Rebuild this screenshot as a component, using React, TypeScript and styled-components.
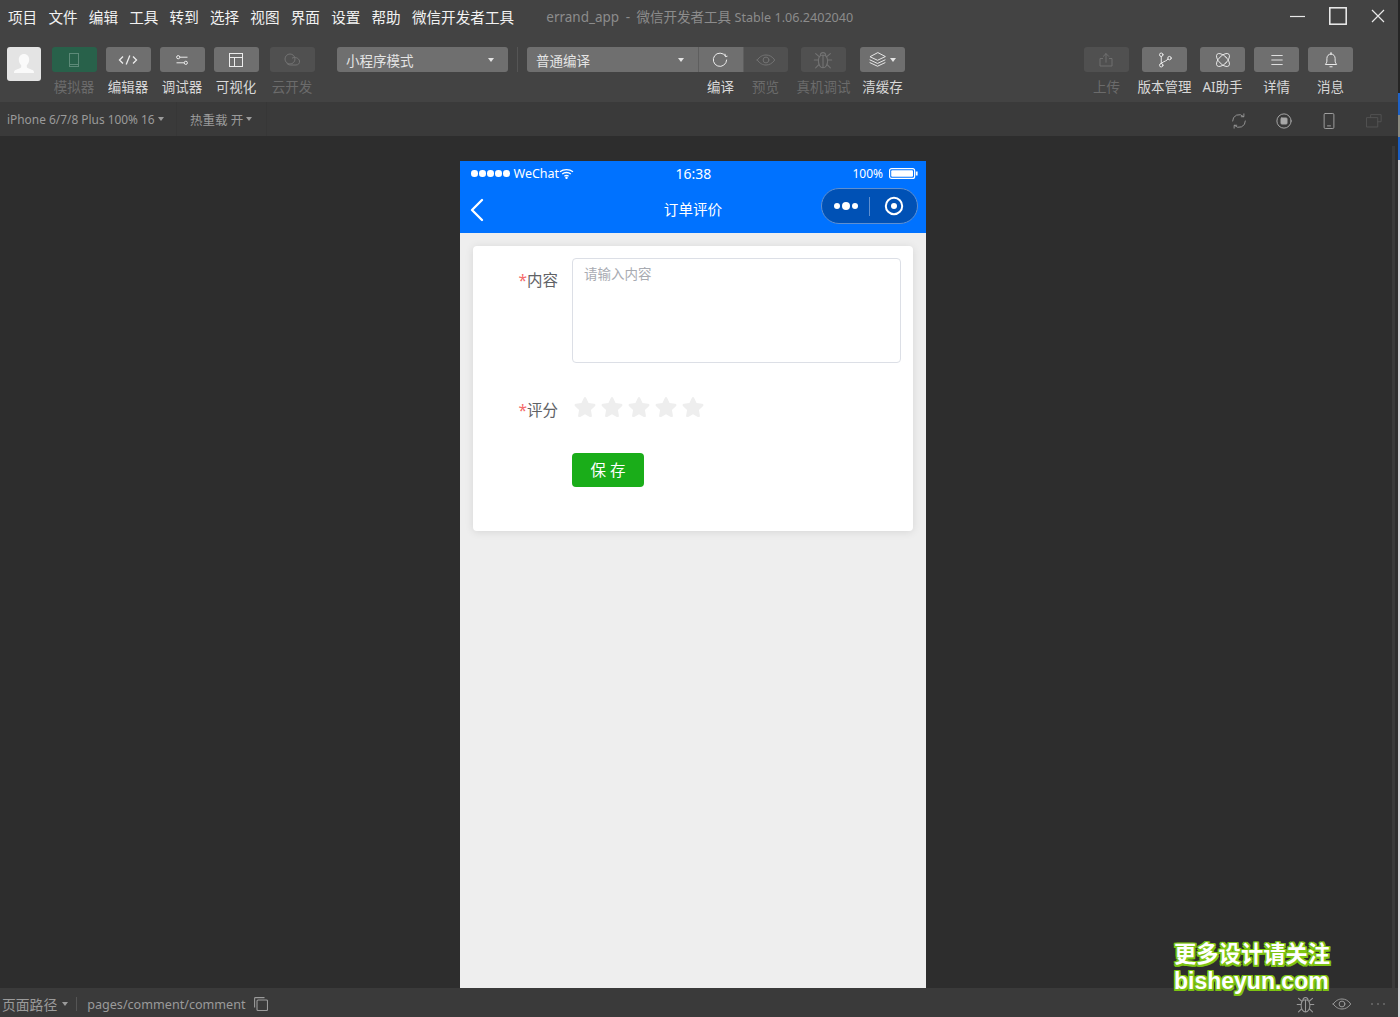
import React from 'react';
import styled, { createGlobalStyle } from 'styled-components';
import { ChevronLeft } from 'lucide-react';

const GlobalStyle = createGlobalStyle`
  html, body {
    margin: 0;
    padding: 0;
    height: 100%;
    background: #2d2d2d;
    overflow: hidden;
  }
  body {
    font-family: "Noto Sans", "Noto Sans CJK SC", sans-serif;
  }
  * { box-sizing: border-box; }
`;

const Page = styled.div`
  position: relative;
  width: 1400px;
  height: 1017px;
  display: flex;
  overflow: hidden;
`;

const Win = styled.div`
  width: 1398px;
  flex: none;
  display: flex;
  flex-direction: column;
`;

const BackWindow = styled.div`
  width: 2px;
  flex: none;
  display: flex;
  flex-direction: column;
`;

const BackSlice = styled.div<{ $h: number; $c: string }>`
  height: ${p => p.$h}px;
  flex: none;
  background: ${p => p.$c};
`;

const Header = styled.div`
  height: 102px;
  flex: none;
  background: #434343;
`;

const MenuRow = styled.div`
  height: 32px;
  display: flex;
  align-items: center;
  padding-left: 8px;
`;

const MenuItem = styled.span`
  font-size: 14.6px;
  color: #f2f2f2;
  margin-right: 11.2px;
  white-space: nowrap;
`;

const WindowTitle = styled.span`
  margin-left: 21px;
  font-size: 13.5px;
  color: #8c8c8c;
  white-space: nowrap;
`;

const TitleDash = styled.span`
  margin: 0 6.5px;
`;

const TitleBuild = styled.span`
  font-size: 12.6px;
`;

const WindowControls = styled.div`
  margin-left: auto;
  display: flex;
  align-items: center;
  gap: 24px;
  padding-right: 13px;
`;

const ToolRow = styled.div`
  display: flex;
  align-items: flex-start;
  padding: 15px 0 0 7px;
`;

const Avatar = styled.div`
  width: 34px;
  height: 34px;
  flex: none;
  border-radius: 3px;
  background: #e4e4e4;
  display: flex;
  align-items: center;
  justify-content: center;
  overflow: hidden;
  margin-right: 10.6px;
`;

const Tool = styled.div<{ $after?: number }>`
  width: 45px;
  flex: none;
  display: flex;
  flex-direction: column;
  align-items: center;
  margin-right: ${p => p.$after ?? 9}px;
`;

const ToolButton = styled.div<{ $tone?: 'on' | 'off' | 'green' }>`
  width: 45px;
  height: 25px;
  border-radius: 3px;
  display: flex;
  align-items: center;
  justify-content: center;
  background: ${p =>
    p.$tone === 'green' ? '#28614a' : p.$tone === 'off' ? '#505050' : '#6f6f6f'};
`;

const ToolLabel = styled.span<{ $off?: boolean }>`
  margin-top: 5px;
  font-size: 13.5px;
  line-height: 20px;
  white-space: nowrap;
  color: ${p => (p.$off ? '#6b6b6b' : '#d8d8d8')};
`;

const ModeSelect = styled.div<{ $width: number; $flatRight?: boolean }>`
  width: ${p => p.$width}px;
  height: 25px;
  flex: none;
  border-radius: ${p => (p.$flatRight ? '3px 0 0 3px' : '3px')};
  background: #6f6f6f;
  display: flex;
  align-items: center;
  justify-content: space-between;
  padding: 0 14px 0 9px;
  font-size: 13.5px;
  color: #e4e4e4;
`;

const SmallCaret = styled.i<{ $color?: string }>`
  display: inline-block;
  width: 0;
  height: 0;
  border-left: 3px solid transparent;
  border-right: 3px solid transparent;
  border-top: 4px solid ${p => p.$color ?? '#e4e4e4'};
`;

const ModeColumn = styled.div`
  margin-left: 22.4px;
  flex: none;
`;

const ToolDivider = styled.div`
  width: 1px;
  height: 25px;
  flex: none;
  background: #555;
  margin: 0 9px;
`;

const CompileGroup = styled.div`
  display: flex;
  flex-direction: column;
  flex: none;
  margin-right: 13px;
`;

const CompileButtons = styled.div`
  display: flex;
`;

const CompileLabels = styled.div`
  display: flex;
  padding-left: 171px;
`;

const CompileLabelCell = styled.div`
  width: 45px;
  display: flex;
  justify-content: center;
`;

const SegButton = styled.div<{ $off?: boolean }>`
  width: 45px;
  height: 25px;
  display: flex;
  align-items: center;
  justify-content: center;
  background: ${p => (p.$off ? '#505050' : '#6f6f6f')};
  border-left: 1px solid #5e5e5e;
  border-radius: ${p => (p.$off ? '0 3px 3px 0' : '0')};
`;

const Spacer = styled.div`
  flex: 1;
`;

const SubBar = styled.div`
  height: 34px;
  flex: none;
  background: #3a3a3a;
  display: flex;
  align-items: center;
  font-size: 11.9px;
  color: #9b9b9b;
`;

const SubItem = styled.div<{ $width: number }>`
  width: ${p => p.$width}px;
  height: 100%;
  padding-left: ${p => (p.$width > 170 ? 7 : 13)}px;
  display: flex;
  align-items: center;
  gap: 3px;
  white-space: nowrap;
  border-right: 1px solid #373737;
  font-size: ${p => (p.$width > 170 ? 11.9 : 12.5)}px;
`;

const SubIcons = styled.div`
  margin-left: auto;
  display: flex;
  align-items: center;
  gap: 27px;
  padding: 3px 15px 0 0;
`;

const Stage = styled.div`
  position: relative;
  flex: 1;
  min-height: 0;
  background: #2d2d2d;
  display: flex;
  justify-content: center;
  padding: 25px 12px 0 0;
`;

const StageScroll = styled.div`
  position: absolute;
  right: 3px;
  top: 10px;
  bottom: 0;
  width: 3px;
  background: #393939;
`;

const Phone = styled.div`
  width: 466px;
  display: flex;
  flex-direction: column;
  background: #eeeeee;
`;

const PhoneHead = styled.div`
  height: 72px;
  flex: none;
  background: #0072ff;
  color: #fff;
`;

const StatusLine = styled.div`
  height: 25px;
  display: grid;
  grid-template-columns: 1fr 1fr 1fr;
  align-items: center;
  padding: 0 8px 0 11px;
  font-size: 12.5px;
`;

const StatusLeft = styled.div`
  display: flex;
  align-items: center;
  gap: 4px;
`;

const StatusTime = styled.div`
  text-align: center;
  font-size: 14px;
  margin-left: -2px;
`;

const StatusRight = styled.div`
  display: flex;
  align-items: center;
  justify-content: flex-end;
  gap: 6px;
  font-size: 12px;
`;

const Dots = styled.div`
  display: flex;
  gap: 1.5px;
`;

const Dot = styled.i`
  width: 6.5px;
  height: 6.5px;
  border-radius: 50%;
  background: #fff;
`;

const NavLine = styled.div`
  height: 47px;
  position: relative;
  display: flex;
  align-items: center;
  justify-content: center;
  font-size: 14.6px;
  padding-bottom: 2px;
`;

const BackIcon = styled.div`
  position: absolute;
  left: -3px;
  top: 4px;
  display: flex;
`;

const Capsule = styled.div`
  position: absolute;
  right: 8px;
  top: 2px;
  width: 97px;
  height: 36px;
  border-radius: 18px;
  background: #0051b5;
  border: 1px solid #5e8fd0;
  display: flex;
  align-items: center;
`;

const CapsuleSide = styled.div`
  flex: 1;
  display: flex;
  align-items: center;
  justify-content: center;
  gap: 2px;
`;

const CapsuleBar = styled.div`
  width: 1px;
  height: 19px;
  background: #5e8fd0;
`;

const CapsuleDot = styled.i<{ $big?: boolean }>`
  width: ${p => (p.$big ? 8 : 6)}px;
  height: ${p => (p.$big ? 8 : 6)}px;
  border-radius: 50%;
  background: #fff;
`;

const Card = styled.div`
  margin: 13px 13px 0;
  height: 285px;
  background: #fff;
  border-radius: 4px;
  box-shadow: 0 1px 8px rgba(0, 0, 0, 0.1);
  padding: 12px 12px 0 0;
`;

const FormRow = styled.div<{ $after: number }>`
  display: flex;
  margin-bottom: ${p => p.$after}px;
`;

const FieldLabel = styled.div<{ $top?: number }>`
  width: 85px;
  flex: none;
  padding-top: ${p => p.$top ?? 0}px;
  text-align: right;
  font-size: 15.5px;
  line-height: 20px;
  color: #606266;
  white-space: nowrap;
`;

const Required = styled.span`
  color: #f56c6c;
`;

const TextArea = styled.div`
  height: 105px;
  border: 1px solid #dcdfe6;
  border-radius: 4px;
  padding: 5px 11px;
  font-size: 13.5px;
  line-height: 20px;
  color: #a8abb2;
`;

const FieldBody = styled.div`
  margin-left: 14px;
  flex: 1;
  min-width: 0;
`;

const Stars = styled.div`
  display: flex;
  gap: 5px;
  height: 21px;
  margin: 7px 0 0 2px;
`;

const SaveButton = styled.div`
  width: 72px;
  height: 34px;
  background: #1aad19;
  border-radius: 4px;
  color: #fff;
  font-size: 15.5px;
  padding-bottom: 2px;
  display: flex;
  align-items: center;
  justify-content: center;
`;

const StatusBar = styled.div`
  height: 29px;
  flex: none;
  background: #3a3a3a;
  display: flex;
  align-items: center;
  font-size: 12.6px;
  color: #9b9b9b;
  padding-top: 2px;
`;

const PathSelect = styled.div`
  display: flex;
  align-items: center;
  gap: 5px;
  padding: 0 8px 0 2px;
  font-size: 13.8px;
  border-right: 1px solid #555;
  height: 14px;
`;

const PagePath = styled.div`
  margin: 1px 0 0 10px;
  display: flex;
  align-items: center;
  gap: 8px;
`;

const BarIcons = styled.div`
  margin-left: auto;
  display: flex;
  align-items: center;
  gap: 16px;
  padding: 1px 11px 0 0;
`;

const Watermark = styled.div`
  position: absolute;
  left: 1174px;
  top: 940px;
  width: 158px;
  font-weight: 700;
  color: #fff;
  text-shadow: 1.5px 0 0 #7ec412, -1.5px 0 0 #7ec412, 0 1.5px 0 #7ec412, 0 -1.5px 0 #7ec412,
    1.5px 1.5px 0 #7ec412, -1.5px 1.5px 0 #7ec412, 1.5px -1.5px 0 #7ec412, -1.5px -1.5px 0 #7ec412;
`;

const WatermarkLine = styled.div`
  font-size: 22.3px;
  line-height: 28px;
  white-space: nowrap;
`;

const WatermarkUrl = styled.div`
  font-family: "Liberation Sans", sans-serif;
  font-size: 23px;
  line-height: 26px;
  white-space: nowrap;
`;

const I = (props: React.SVGProps<SVGSVGElement> & { s?: number }) => {
  const { s = 16, children, ...rest } = props;
  return (
    <svg width={s} height={s} viewBox="0 0 24 24" fill="none" stroke="currentColor" strokeWidth={1.5} strokeLinecap="round" strokeLinejoin="round" {...rest}>
      {children}
    </svg>
  );
};

const BugIcon = ({ color, s = 22, after = 0 }: { color: string; s?: number; after?: number }) => (
  <I s={s} style={{ color, marginRight: after }} strokeWidth={1.2}>
    <path d="M12 6.500c-3.300 0-5 2.600-5 6.500s2 7.500 5 7.500 5-3.600 5-7.500-1.700-6.500-5-6.500zM12 6.500V20.500M9 7.500c0-2 1.200-3.500 3-3.500s3 1.500 3 3.500M7 12H2.500M17 12h4.500M7.500 8 4 5M16.500 8 20 5M7.500 17 4 20.500M16.500 17 20 20.500" />
  </I>
);

const EyeIcon = ({ color, s = 20, after = 0 }: { color: string; s?: number; after?: number }) => (
  <I s={s} style={{ color, marginRight: after }} strokeWidth={1.2}>
    <path d="M1.500 12C4.500 7.800 8 6 12 6s7.500 1.800 10.500 6c-3 4.200-6.500 6-10.500 6S4.500 16.200 1.500 12z" />
    <circle cx="12" cy="12" r="3.500" />
  </I>
);

const White = '#ececec';
const Dim = '#737373';

export default function App() {
  const menus = ['项目', '文件', '编辑', '工具', '转到', '选择', '视图', '界面', '设置', '帮助', '微信开发者工具'];

  return (
    <Page>
      <GlobalStyle />
      <Win>
        <Header>
          <MenuRow>
            {menus.map(m => (
              <MenuItem key={m}>{m}</MenuItem>
            ))}
            <WindowTitle>
              errand_app<TitleDash>-</TitleDash>微信开发者工具 <TitleBuild>Stable 1.06.2402040</TitleBuild>
            </WindowTitle>
            <WindowControls>
              <svg width="15" height="15" viewBox="0 0 15 15" stroke="#e8e8e8" strokeWidth="1.2"><path d="M0 7.500h15" /></svg>
              <svg width="18" height="18" viewBox="0 0 18 18" fill="none" stroke="#f0f0f0" strokeWidth="1.500"><rect x="0.800" y="0.800" width="16.400" height="16.400" /></svg>
              <svg width="14" height="14" viewBox="0 0 14 14" stroke="#e8e8e8" strokeWidth="1.200"><path d="M1 1l12 12M13 1L1 13" /></svg>
            </WindowControls>
          </MenuRow>
          <ToolRow>
            <Avatar>
              <svg width="34" height="34" viewBox="0 0 34 34" fill="#fafafa">
                <path d="M17 7c3.300 0 5.200 2.500 5.200 5.600 0 2.400-1 4.400-2.400 5.600v1.700c0 1 3.600 2 5.800 3.200 1 .6 1.400 1.400 1.400 2.900H7c0-1.500.4-2.300 1.400-2.900 2.200-1.200 5.800-2.200 5.800-3.200v-1.700c-1.400-1.200-2.400-3.200-2.400-5.600C11.800 9.500 13.700 7 17 7z" />
              </svg>
            </Avatar>
            <Tool>
              <ToolButton $tone="green">
                <svg width="10" height="14" viewBox="0 0 10 14" fill="none" stroke="#5d8a78" strokeWidth="1"><rect x="0.500" y="0.500" width="9" height="13" /><path d="M0.500 11.500h9" /></svg>
              </ToolButton>
              <ToolLabel $off>模拟器</ToolLabel>
            </Tool>
            <Tool>
              <ToolButton>
                <svg width="20" height="12" viewBox="0 0 20 12" fill="none" stroke={White} strokeWidth="1.300">
                  <path d="M5 2.500 1.500 6 5 9.500M15 2.500 18.500 6 15 9.500M11.800 1.500 8.200 10.500" />
                </svg>
              </ToolButton>
              <ToolLabel>编辑器</ToolLabel>
            </Tool>
            <Tool>
              <ToolButton>
                <svg width="12" height="10" viewBox="0 0 12 10" fill="none" stroke={White} strokeWidth="1">
                  <circle cx="2.200" cy="2.200" r="1.600" /><path d="M3.800 2.200H11.500M.5 7.800h7.700" /><circle cx="9.800" cy="7.800" r="1.600" />
                </svg>
              </ToolButton>
              <ToolLabel>调试器</ToolLabel>
            </Tool>
            <Tool $after={11}>
              <ToolButton>
                <svg width="14" height="14" viewBox="0 0 14 14" fill="none" stroke={White} strokeWidth="1"><rect x="0.500" y="0.500" width="13" height="13" /><path d="M0.500 4.500h13M5.500 4.500v9" /></svg>
              </ToolButton>
              <ToolLabel>可视化</ToolLabel>
            </Tool>
            <Tool $after={0}>
              <ToolButton $tone="off">
                <svg width="17" height="13" viewBox="0 0 17 13" fill="none" stroke={Dim} strokeWidth="1">
                  <circle cx="6" cy="6" r="5" /><path d="M8 5.200c3-1.800 7 0 7.500 2.800.3 2.300-1.200 4-3.500 4H6.500C4.500 12 3 11 2.500 9.500" />
                </svg>
              </ToolButton>
              <ToolLabel $off>云开发</ToolLabel>
            </Tool>
            <ModeColumn>
              <ModeSelect $width={171}>
                小程序模式
                <SmallCaret />
              </ModeSelect>
            </ModeColumn>
            <ToolDivider />
            <CompileGroup>
              <CompileButtons>
                <ModeSelect $width={171} $flatRight>
                  普通编译
                  <SmallCaret />
                </ModeSelect>
                <SegButton>
                  <I s={20} style={{ color: White, marginLeft: -1 }} strokeWidth={1.200}>
                    <path d="M18.500 7A8 8 0 1 0 20 12M20.500 7.500l-2 .500-.500-3" />
                  </I>
                </SegButton>
                <SegButton $off>
                  <EyeIcon color={Dim} />
                </SegButton>
              </CompileButtons>
              <CompileLabels>
                <CompileLabelCell><ToolLabel>编译</ToolLabel></CompileLabelCell>
                <CompileLabelCell><ToolLabel $off>预览</ToolLabel></CompileLabelCell>
              </CompileLabels>
            </CompileGroup>
            <Tool $after={14}>
              <ToolButton $tone="off">
                <BugIcon color={Dim} />
              </ToolButton>
              <ToolLabel $off>真机调试</ToolLabel>
            </Tool>
            <Tool $after={0}>
              <ToolButton>
                <I s={19} style={{ color: White, marginRight: 3 }} strokeWidth={1.200}>
                  <path d="M12 3.500 2.500 8.500 12 13l9.500-4.500zM2.500 12.500 12 17l9.500-4.500M2.500 16 12 20.500 21.500 16" />
                </I>
                <SmallCaret />
              </ToolButton>
              <ToolLabel>清缓存</ToolLabel>
            </Tool>
            <Spacer />
            <Tool $after={13}>
              <ToolButton $tone="off">
                <I s={18} style={{ color: Dim, marginLeft: -1 }} strokeWidth={1.200}>
                  <path d="M7.500 10H4v10h16V10h-3.500M12 15V3.500M8.500 7 12 3.500 15.500 7" />
                </I>
              </ToolButton>
              <ToolLabel $off>上传</ToolLabel>
            </Tool>
            <Tool $after={13}>
              <ToolButton>
                <I s={18} style={{ color: White }} strokeWidth={1.300}>
                  <circle cx="7" cy="5" r="2.300" /><circle cx="7" cy="19" r="2.300" /><circle cx="18" cy="9.500" r="2.300" />
                  <path d="M7 7.300v9.400M16 10.500c-1 3-5 2.500-9 6" />
                </I>
              </ToolButton>
              <ToolLabel>版本管理</ToolLabel>
            </Tool>
            <Tool>
              <ToolButton>
                <I s={18} style={{ color: White }} strokeWidth={1.200}>
                  <ellipse cx="12" cy="12" rx="5.500" ry="11" transform="rotate(45 12 12)" />
                  <ellipse cx="12" cy="12" rx="5.500" ry="11" transform="rotate(-45 12 12)" />
                </I>
              </ToolButton>
              <ToolLabel>AI助手</ToolLabel>
            </Tool>
            <Tool>
              <ToolButton>
                <I s={18} style={{ color: White }} strokeWidth={1.200}><path d="M5 6h14M5 12h14M5 18h14" /></I>
              </ToolButton>
              <ToolLabel>详情</ToolLabel>
            </Tool>
            <Tool $after={45}>
              <ToolButton>
                <I s={18} style={{ color: White }} strokeWidth={1.300}>
                  <path d="M12 4c-3.500 0-5.500 2.800-5.500 6v3.500c0 2-1.500 3.500-2 4.500h15c-.5-1-2-2.500-2-4.500V10c0-3.200-2-6-5.500-6zM12 2v2M10.500 21h3" />
                </I>
              </ToolButton>
              <ToolLabel>消息</ToolLabel>
            </Tool>
          </ToolRow>
        </Header>
        <SubBar>
          <SubItem $width={177}>
            iPhone 6/7/8 Plus 100% 16 <SmallCaret $color="#9b9b9b" />
          </SubItem>
          <SubItem $width={90}>
            热重载 开 <SmallCaret $color="#9b9b9b" />
          </SubItem>
          <SubIcons>
            <I s={18} style={{ color: '#9a9a9a' }} strokeWidth={1.200}>
              <path d="M3.500 12A8.500 8.500 0 0 1 18 6M20.500 12A8.500 8.500 0 0 1 6 18M18.500 2.500V6.300H15M5.500 21.500V17.700H9" />
            </I>
            <I s={18} style={{ color: '#a8a8a8' }} strokeWidth={1.300}>
              <circle cx="12" cy="12" r="9.500" />
              <rect x="8" y="8" width="8" height="8" rx="1" fill="currentColor" />
            </I>
            <I s={18} style={{ color: '#a8a8a8' }} strokeWidth={1.200}>
              <rect x="5.500" y="2" width="13" height="20" rx="1.500" /><path d="M10 18.500h4" />
            </I>
            <I s={18} style={{ color: '#555' }} strokeWidth={1.200}>
              <path d="M7.500 7V3.500h14V13H17M2.500 7.500H17V20H2.500z" />
            </I>
          </SubIcons>
        </SubBar>
        <Stage>
          <StageScroll />
          <Phone>
            <PhoneHead>
              <StatusLine>
                <StatusLeft>
                  <Dots>
                    <Dot /><Dot /><Dot /><Dot /><Dot />
                  </Dots>
                  WeChat
                  <svg width="15" height="11" viewBox="0 0 15 11" fill="none" stroke="#fff" strokeWidth="1.300" style={{ marginLeft: -4 }}>
                    <path d="M1 3.800c3.600-3 9.400-3 13 0M3.200 6c2.400-2 6.200-2 8.600 0M5.400 8.200c1.200-1 3-1 4.200 0" />
                    <circle cx="7.500" cy="9.800" r=".6" fill="#fff" />
                  </svg>
                </StatusLeft>
                <StatusTime>16:38</StatusTime>
                <StatusRight>
                  100%
                  <svg width="29" height="11" viewBox="0 0 29 11" fill="none">
                    <rect x="0.600" y="0.600" width="25" height="9.800" rx="2" stroke="#fff" strokeWidth="1.200" />
                    <rect x="2.200" y="2.200" width="21.800" height="6.600" rx="1" fill="#fff" />
                    <rect x="26.800" y="3.500" width="1.800" height="4" fill="#fff" />
                  </svg>
                </StatusRight>
              </StatusLine>
              <NavLine>
                <BackIcon>
                  <ChevronLeft size={40} strokeWidth={1.4} color="#fff" />
                </BackIcon>
                订单评价
                <Capsule>
                  <CapsuleSide>
                    <CapsuleDot /><CapsuleDot $big /><CapsuleDot />
                  </CapsuleSide>
                  <CapsuleBar />
                  <CapsuleSide>
                    <svg width="20" height="20" viewBox="0 0 20 20" fill="none">
                      <circle cx="10" cy="10" r="8.200" stroke="#fff" strokeWidth="2" />
                      <circle cx="10" cy="10" r="3" fill="#fff" />
                    </svg>
                  </CapsuleSide>
                </Capsule>
              </NavLine>
            </PhoneHead>
            <Card>
              <FormRow $after={26}>
                <FieldLabel $top={12}><Required>*</Required>内容</FieldLabel>
                <FieldBody>
                  <TextArea>请输入内容</TextArea>
                </FieldBody>
              </FormRow>
              <FormRow $after={33}>
                <FieldLabel $top={11}><Required>*</Required>评分</FieldLabel>
                <FieldBody>
                  <Stars>
                    {[0, 1, 2, 3, 4].map(i => (
                      <svg key={i} width="22" height="21" viewBox="0 0 24 23" fill="#eeeeee">
                        <path d="M12 1.200c.6 0 1 .3 1.300 1l2.600 5.500 6 .8c.8.100 1.300.4 1.500 1 .2.600 0 1.100-.6 1.700l-4.300 4.200 1 6c.1.800 0 1.300-.5 1.600-.5.400-1 .3-1.700-.1L12 20l-5.300 2.900c-.7.400-1.200.5-1.700.1-.5-.3-.6-.8-.5-1.600l1-6-4.300-4.200c-.6-.6-.8-1.100-.6-1.700.2-.6.700-.9 1.500-1l6-.8 2.600-5.500c.3-.7.700-1 1.300-1z" />
                      </svg>
                    ))}
                  </Stars>
                </FieldBody>
              </FormRow>
              <FormRow $after={0}>
                <FieldLabel />
                <FieldBody>
                  <SaveButton>保 存</SaveButton>
                </FieldBody>
              </FormRow>
            </Card>
          </Phone>
        </Stage>
        <StatusBar>
          <PathSelect>
            页面路径 <SmallCaret $color="#9b9b9b" />
          </PathSelect>
          <PagePath>
            pages/comment/comment
            <svg width="14" height="14" viewBox="0 0 14 14" fill="none" stroke="#9b9b9b" strokeWidth="1.100">
              <rect x="3" y="3" width="10.500" height="10.500" rx="1" /><path d="M.6 10.500V1.500c0-.5.4-.9.900-.9h9" />
            </svg>
          </PagePath>
          <BarIcons>
            <BugIcon color="#9a9a9a" s={21} />
            <EyeIcon color="#9a9a9a" s={20} after={1} />
            <I s={18} style={{ color: '#9a9a9a' }} strokeWidth={2}><path d="M4 12h.01M12 12h.01M20 12h.01" /></I>
          </BarIcons>
        </StatusBar>
      </Win>
      <BackWindow>
        <BackSlice $h={93} $c="#252525" />
        <BackSlice $h={22} $c="#1f63c8" />
        <BackSlice $h={22} $c="#8d8d84" />
        <BackSlice $h={23} $c="#1f63c8" />
        <BackSlice $h={857} $c="#d2d2d6" />
      </BackWindow>
      <Watermark>
        <WatermarkLine>更多设计请关注</WatermarkLine>
        <WatermarkUrl>bisheyun.com</WatermarkUrl>
      </Watermark>
    </Page>
  );
}
